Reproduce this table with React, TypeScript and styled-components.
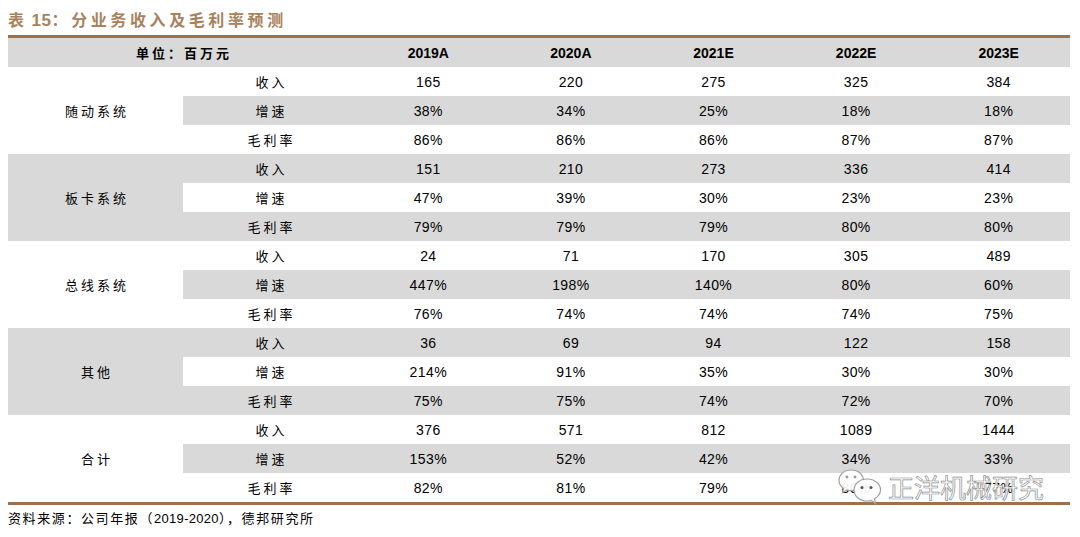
import React from "react";
import styled, { createGlobalStyle } from "styled-components";

const GlobalStyle = createGlobalStyle`
  html, body { margin: 0; padding: 0; background: #ffffff; }
  body { width: 1080px; height: 537px; overflow: hidden; }
`;

const CJK = `"Noto Sans CJK SC", "Noto Sans", sans-serif`;
const NUM = `"Liberation Sans", Arial, "Noto Sans CJK SC", sans-serif`;
const BROWN = "#9e6f49";
const GRAY = "#d9d9d9";

const Page = styled.div`
  position: relative;
  padding: 8px 10px 0 8px;
  font-family: ${CJK};
  color: #000;
`;

const Title = styled.div`
  height: 22px;
  line-height: 22px;
  margin-bottom: 5px;
  font-size: 16px;
  font-weight: 700;
  color: #a8825d;
  letter-spacing: 3.6px;
  white-space: nowrap;
`;

const TitleNum = styled.span`
  font-family: ${NUM};
  font-size: 17px;
  letter-spacing: 0.5px;
  margin-left: 4px;
`;

const TableFrame = styled.div`
  width: 1062px;
  border-top: 3px solid ${BROWN};
  border-bottom: 3px solid ${BROWN};
`;

const Table = styled.table`
  width: 1062px;
  border-collapse: collapse;
  border-spacing: 0;
  table-layout: fixed;
`;

const Row = styled.tr`
  height: 29px;
`;

const HeadCell = styled.th<{ $cjk?: boolean }>`
  padding: 0 0 0 ${(p) => (p.$cjk ? "3px" : "0")};
  background: ${GRAY};
  font-family: ${(p) => (p.$cjk ? CJK : NUM)};
  font-size: ${(p) => (p.$cjk ? "13px" : "14px")};
  font-weight: 700;
  letter-spacing: ${(p) => (p.$cjk ? "3px" : "0")};
  text-align: center;
  vertical-align: middle;
`;

const GroupCell = styled.td<{ $shaded: boolean }>`
  padding: 0 0 0 3px;
  background: ${(p) => (p.$shaded ? GRAY : "#ffffff")};
  font-size: 13px;
  letter-spacing: 3px;
  text-align: center;
  vertical-align: middle;
`;

const SubCell = styled.td<{ $shaded: boolean }>`
  padding: 0 0 0 3px;
  background: ${(p) => (p.$shaded ? GRAY : "#ffffff")};
  font-size: 13px;
  letter-spacing: 3px;
  text-align: center;
  vertical-align: middle;
`;

const ValueCell = styled.td<{ $shaded: boolean }>`
  padding: 0;
  background: ${(p) => (p.$shaded ? GRAY : "#ffffff")};
  font-family: ${NUM};
  font-size: 14px;
  letter-spacing: 0.4px;
  text-align: center;
  vertical-align: middle;
`;

const Source = styled.div`
  margin-top: 3px;
  height: 20px;
  line-height: 20px;
  font-size: 13px;
  letter-spacing: 1.6px;
  white-space: nowrap;
`;

const SourceNum = styled.span`
  font-family: ${NUM};
  font-size: 13px;
  letter-spacing: 0.3px;
`;

const Watermark = styled.div`
  position: absolute;
  left: 838px;
  top: 466px;
  display: flex;
  align-items: center;
  gap: 4px;
  pointer-events: none;
`;

const WatermarkText = styled.span`
  font-family: ${CJK};
  font-size: 26px;
  font-weight: 400;
  letter-spacing: 0px;
  color: rgba(255, 255, 255, 0.95);
  -webkit-text-stroke: 0.7px #8f8f8f;
  line-height: 36px;
`;

const WeChatIcon = () => (
  <svg width="46" height="42" viewBox="0 0 46 42">
    <path
      d="M13 4 C5 4 1 9.5 1 14.5 C1 18 3 20.5 5.5 22.5 L4.5 26.5 L9 24 C10.5 24.5 12 24.7 13.5 24.7 C21 24.7 25.5 19.7 25.5 14.3 C25.5 9 21 4 13 4 Z"
      fill="rgba(255,255,255,0.92)"
      stroke="#a0a0a0"
      strokeWidth="1.2"
    />
    <circle cx="9" cy="11" r="1.4" fill="#9a9a9a" />
    <circle cx="17" cy="11" r="1.4" fill="#9a9a9a" />
    <path
      d="M29 13 C21.5 13 16 18 16 24 C16 30 21.5 35 29 35 C30.5 35 32 34.8 33.2 34.4 L37.5 37.5 L36.5 32.7 C40 30.6 42.5 27.5 42.5 24 C42.5 18 37 13 29 13 Z"
      fill="rgba(255,255,255,0.92)"
      stroke="#a0a0a0"
      strokeWidth="1.2"
    />
    <circle cx="24" cy="21.5" r="1.5" fill="#555" />
    <circle cx="33" cy="21.5" r="1.5" fill="#555" />
  </svg>
);

type Group = { name: string; rows: { label: string; values: string[] }[] };

const years = ["2019A", "2020A", "2021E", "2022E", "2023E"];

const groups: Group[] = [
  {
    name: "随动系统",
    rows: [
      { label: "收入", values: ["165", "220", "275", "325", "384"] },
      { label: "增速", values: ["38%", "34%", "25%", "18%", "18%"] },
      { label: "毛利率", values: ["86%", "86%", "86%", "87%", "87%"] },
    ],
  },
  {
    name: "板卡系统",
    rows: [
      { label: "收入", values: ["151", "210", "273", "336", "414"] },
      { label: "增速", values: ["47%", "39%", "30%", "23%", "23%"] },
      { label: "毛利率", values: ["79%", "79%", "79%", "80%", "80%"] },
    ],
  },
  {
    name: "总线系统",
    rows: [
      { label: "收入", values: ["24", "71", "170", "305", "489"] },
      { label: "增速", values: ["447%", "198%", "140%", "80%", "60%"] },
      { label: "毛利率", values: ["76%", "74%", "74%", "74%", "75%"] },
    ],
  },
  {
    name: "其他",
    rows: [
      { label: "收入", values: ["36", "69", "94", "122", "158"] },
      { label: "增速", values: ["214%", "91%", "35%", "30%", "30%"] },
      { label: "毛利率", values: ["75%", "75%", "74%", "72%", "70%"] },
    ],
  },
  {
    name: "合计",
    rows: [
      { label: "收入", values: ["376", "571", "812", "1089", "1444"] },
      { label: "增速", values: ["153%", "52%", "42%", "34%", "33%"] },
      { label: "毛利率", values: ["82%", "81%", "79%", "80%", "77%"] },
    ],
  },
];

export default function App() {
  return (
    <>
      <GlobalStyle />
      <Page>
        <Title>
          表<TitleNum>15</TitleNum>：分业务收入及毛利率预测
        </Title>
        <TableFrame>
          <Table>
            <colgroup>
              <col style={{ width: 175 }} />
              <col style={{ width: 174 }} />
              <col />
              <col />
              <col />
              <col />
              <col />
            </colgroup>
            <thead>
              <Row>
                <HeadCell $cjk colSpan={2}>
                  单位：百万元
                </HeadCell>
                {years.map((y) => (
                  <HeadCell key={y}>{y}</HeadCell>
                ))}
              </Row>
            </thead>
            <tbody>
              {groups.map((g, gi) =>
                g.rows.map((r, ri) => {
                  const idx = gi * 3 + ri;
                  const shaded = idx % 2 === 1;
                  return (
                    <Row key={`${gi}-${ri}`}>
                      {ri === 0 && (
                        <GroupCell rowSpan={3} $shaded={gi % 2 === 1}>
                          {g.name}
                        </GroupCell>
                      )}
                      <SubCell $shaded={shaded}>{r.label}</SubCell>
                      {r.values.map((v, vi) => (
                        <ValueCell key={vi} $shaded={shaded}>
                          {v}
                        </ValueCell>
                      ))}
                    </Row>
                  );
                })
              )}
            </tbody>
          </Table>
        </TableFrame>
        <Source>
          资料来源：公司年报（<SourceNum>2019-2020</SourceNum>），德邦研究所
        </Source>
        <Watermark>
          <WeChatIcon />
          <WatermarkText>正洋机械研究</WatermarkText>
        </Watermark>
      </Page>
    </>
  );
}
